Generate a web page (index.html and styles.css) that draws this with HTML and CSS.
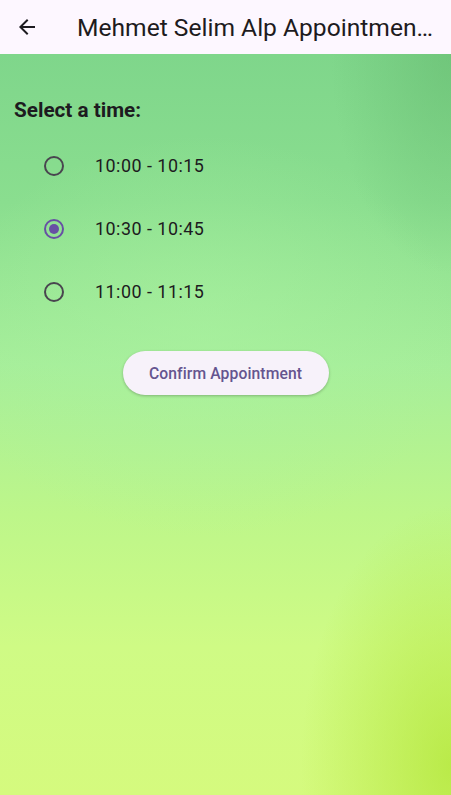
FILE: index.html
```html
<!DOCTYPE html>
<html>
<head>
<meta charset="utf-8">
<link rel="stylesheet" href="styles.css">
</head>
<body>
<div class="screen">
  <header class="appbar">
    <button class="back" aria-label="Back">
      <svg width="24" height="24" viewBox="0 0 24 24"><path d="M20 11H7.83l5.59-5.59L12 4l-8 8 8 8 1.41-1.41L7.83 13H20v-2z" fill="#1d1b20"/></svg>
    </button>
    <h1 class="title">Mehmet Selim Alp Appointments</h1>
  </header>
  <main class="content">
    <h2 class="label">Select a time:</h2>
    <div class="options">
      <label class="option"><span class="radio"></span><span class="otext">10:00 - 10:15</span></label>
      <label class="option"><span class="radio checked"></span><span class="otext">10:30 - 10:45</span></label>
      <label class="option"><span class="radio"></span><span class="otext">11:00 - 11:15</span></label>
    </div>
    <div class="actions">
      <button class="confirm">Confirm Appointment</button>
    </div>
  </main>
</div>
</body>
</html>
```
FILE: styles.css
```css
html, body {
  margin: 0;
  padding: 0;
  width: 451px;
  height: 795px;
  overflow: hidden;
  font-family: Roboto, "Noto Sans", sans-serif;
}
.screen {
  width: 451px;
  height: 795px;
  display: flex;
  flex-direction: column;
}
.appbar {
  height: 54px;
  flex: none;
  background: #fdf7ff;
  display: flex;
  align-items: center;
}
.back {
  width: 48px;
  height: 48px;
  margin-left: 3px;
  border: none;
  background: none;
  padding: 0;
  display: flex;
  align-items: center;
  justify-content: center;
}
.title {
  margin: 0 0 0 26px;
  font-size: 24.6px;
  font-weight: 400;
  color: #1d1b20;
  white-space: nowrap;
  overflow: hidden;
  text-overflow: ellipsis;
  min-width: 0;
  flex: 1;
  padding-right: 18px;
}
.content {
  flex: 1;
  padding: 41px 14px 0;
  background:
    radial-gradient(ellipse 150px 260px at 100% 96%, rgba(175,228,50,0.7), rgba(175,228,50,0) 100%),
    radial-gradient(ellipse 120px 220px at 100% 0%, rgba(100,185,110,0.55), rgba(100,185,110,0) 100%),
    radial-gradient(ellipse 260px 200px at 45% 38%, rgba(170,242,160,0.55), rgba(170,242,160,0) 100%),
    linear-gradient(180deg, #7fd68b 0%, #8ade8f 20%, #a6ee9a 42%, #bdf68a 62%, #cffb85 80%, #d5fa7e 100%);
}
.label {
  margin: 0;
  font-size: 20.7px;
  font-weight: 700;
  color: #1d1b20;
  line-height: 30px;
}
.options {
  display: flex;
  flex-direction: column;
  margin-top: 9px;
}
.option {
  height: 63px;
  display: flex;
  align-items: center;
  padding-left: 30px;
}
.radio {
  width: 16px;
  height: 16px;
  border: 2px solid #49454f;
  border-radius: 50%;
  box-sizing: content-box;
  display: flex;
  align-items: center;
  justify-content: center;
}
.radio.checked {
  border-color: #6750a4;
}
.radio.checked::after {
  content: "";
  width: 10px;
  height: 10px;
  border-radius: 50%;
  background: #6750a4;
}
.otext {
  margin-left: 31px;
  font-size: 17.9px;
  letter-spacing: 0.5px;
  color: #1d1b20;
}
.actions {
  display: flex;
  justify-content: center;
  margin-top: 28px;
}
.confirm {
  height: 44px;
  width: 206px;
  border: none;
  border-radius: 22px;
  background: #f7f2fa;
  color: #65558f;
  font-family: Roboto, "Noto Sans", sans-serif;
  font-size: 15.7px;
  font-weight: 500;
  letter-spacing: 0.1px;
  box-shadow: 0 1px 3px rgba(0,0,0,0.25);
  margin-left: 0;
}
```
